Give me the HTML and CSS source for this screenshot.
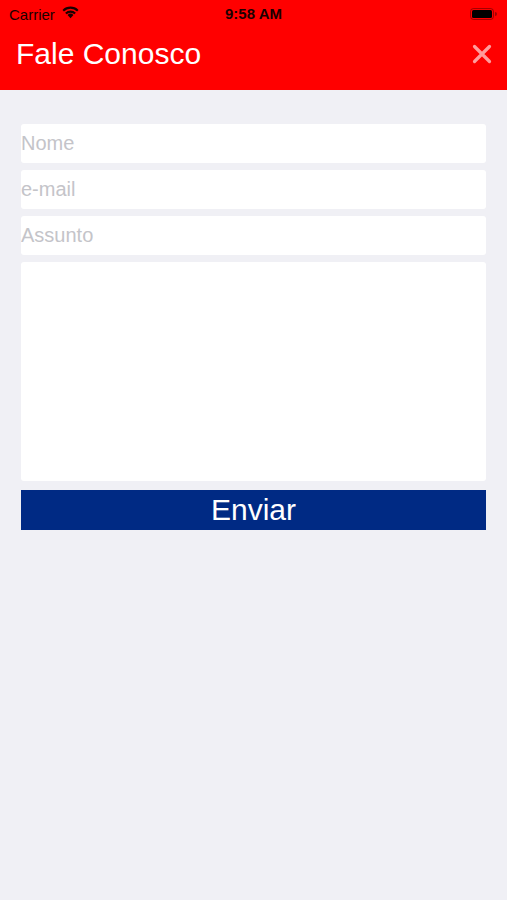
FILE: index.html
```html
<!DOCTYPE html>
<html lang="pt">
<head>
    <meta charset="UTF-8">
    <meta name="viewport" content="width=device-width, initial-scale=1.0">
    <title>Fale Conosco</title>
    <link rel="stylesheet" href="styles.css">
</head>
<body>
    <header class="header">
        <div class="status-bar">
            <div class="status-left">
                <span>Carrier</span>
                <svg class="wifi" width="19" height="14" viewBox="0 0 18 13">
                    <path d="M9 12.5 L6.2 9.4 A4 4 0 0 1 11.8 9.4 Z" fill="#1a0000"/>
                    <path d="M3.9 7.1 A7.3 7.3 0 0 1 14.1 7.1 L12.7 8.6 A5.3 5.3 0 0 0 5.3 8.6 Z" fill="#1a0000"/>
                    <path d="M1.4 4.5 A10.8 10.8 0 0 1 16.6 4.5 L15.2 6 A8.8 8.8 0 0 0 2.8 6 Z" fill="#1a0000"/>
                </svg>
            </div>
            <span class="status-time">9:58 AM</span>
            <div class="status-right">
                <svg width="27" height="12" viewBox="0 0 27 12">
                    <rect x="0.5" y="0.5" width="23" height="11" rx="3" fill="none" stroke="#1a0000" stroke-opacity="0.4"/>
                    <rect x="2" y="2" width="20" height="8" rx="1.5" fill="#000"/>
                    <path d="M25 4 v4 a2 2 0 0 0 0 -4z" fill="#1a0000" fill-opacity="0.4"/>
                </svg>
            </div>
        </div>
        <div class="nav-bar">
            <h1 class="title">Fale Conosco</h1>
            <svg class="close" width="20" height="20" viewBox="0 0 20 20">
                <path d="M2.5 2.5 L17.5 17.5 M17.5 2.5 L2.5 17.5" stroke="#ff9d9d" stroke-width="3.2" stroke-linecap="round"/>
            </svg>
        </div>
    </header>

    <form class="form" onsubmit="return false">
        <input class="field" type="text" placeholder="Nome">
        <input class="field" type="email" placeholder="e-mail">
        <input class="field" type="text" placeholder="Assunto">
        <textarea class="field message"></textarea>
        <button class="send" type="submit">Enviar</button>
    </form>
</body>
</html>
```

FILE: styles.css
```css
body {
    margin: 0;
    font-family: "Liberation Sans", Arial, sans-serif;
    background-color: #f0f0f5;
    min-height: 100vh;
}
.header {
    background-color: #ff0000;
    height: 90px;
}
.status-bar {
    height: 28px;
    display: flex;
    align-items: center;
    justify-content: space-between;
    padding: 0 10px 0 9px;
    font-size: 15px;
    font-weight: bold;
    color: #1a0000;
    position: relative;
}
.status-left {
    display: flex;
    align-items: center;
    gap: 6px;
    font-weight: normal;
}
.wifi {
    margin-top: -4px;
}
.status-time {
    position: absolute;
    left: 0;
    right: 0;
    text-align: center;
    top: 5px;
}
.status-right {
    display: flex;
    align-items: center;
}
.nav-bar {
    height: 52px;
    display: flex;
    align-items: center;
    justify-content: space-between;
    padding: 0 15px 0 16px;
}
.title {
    margin: 0;
    font-size: 30px;
    font-weight: normal;
    color: #fff;
}
.form {
    display: flex;
    flex-direction: column;
    gap: 7px;
    padding: 34px 21px 0 21px;
}
.field {
    height: 39px;
    border: none;
    border-radius: 3px;
    background: #fff;
    padding: 0;
    margin: 0;
    font-family: "Liberation Sans", Arial, sans-serif;
    font-size: 20px;
    color: #333;
    outline: none;
    box-sizing: border-box;
}
.field::placeholder {
    color: #c4c4c9;
}
.message {
    height: 219px;
    resize: none;
}
.send {
    margin-top: 2px;
    height: 40px;
    border: none;
    border-radius: 0;
    background-color: #002a84;
    color: #fff;
    font-family: "Liberation Sans", Arial, sans-serif;
    font-size: 30px;
    padding: 0;
    cursor: pointer;
}
```
